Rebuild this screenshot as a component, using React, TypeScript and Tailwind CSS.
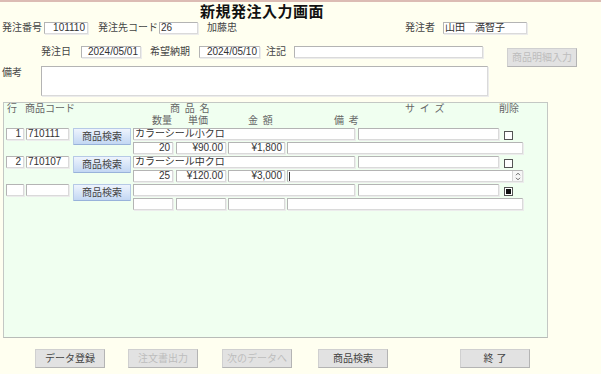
import React from "react";

const FONT = "font-['Liberation_Sans','Noto_Sans_CJK_JP',sans-serif]";

function Box({
  w,
  children,
  right,
  className = "",
}: {
  w: string;
  children?: React.ReactNode;
  right?: boolean;
  className?: string;
}) {
  return (
    <div
      className={`${w} h-[12px] shrink-0 bg-white border border-[#b4b4b4] border-b-[#dadada] border-r-[#dadada] shadow-[1px_1px_0_#ececec] text-[10px] leading-[10px] text-[#333] whitespace-nowrap overflow-hidden ${
        right ? "text-right pr-[2px]" : "text-left pl-[1px]"
      } ${className}`}
    >
      {children}
    </div>
  );
}

function GrayButton({
  w,
  children,
  disabled,
  className = "",
}: {
  w: string;
  children: React.ReactNode;
  disabled?: boolean;
  className?: string;
}) {
  return (
    <div
      className={`${w} h-[19px] shrink-0 flex items-center justify-center bg-[#e2e2e2] border border-[#d0d0d0] border-b-[#b4b4b4] border-r-[#b4b4b4] text-[10px] leading-[10px] ${
        disabled ? "text-[#bdbdbd]" : "text-[#444]"
      } ${className}`}
    >
      {children}
    </div>
  );
}

function BlueButton() {
  return (
    <div className="w-[58px] h-[17px] shrink-0 ml-[4px] flex items-center justify-center rounded-[1px] bg-gradient-to-b from-[#eef4fd] to-[#c3d7f3] border border-[#b6c9e6] border-b-[#98b2da] text-[10px] leading-[10px] text-[#444]">
      商品検索
    </div>
  );
}

function Check({ checked }: { checked?: boolean }) {
  return (
    <div className="w-[9px] h-[9px] ml-[5px] mt-[3px] shrink-0 bg-white border border-[#555] flex items-center justify-center">
      {checked && <div className="w-[5px] h-[5px] bg-[#111]" />}
    </div>
  );
}

type RowData = {
  no: string;
  code: string;
  name: string;
  qty: string;
  price: string;
  amount: string;
  checked?: boolean;
  spinner?: boolean;
};

function Row({ r }: { r: RowData }) {
  return (
    <div className="flex items-start h-[26px] mb-[2px]">
      <Box w="w-[18px] ml-[2px]" right>
        {r.no}
      </Box>
      <Box w="w-[43px] ml-[2px]">{r.code}</Box>
      <BlueButton />
      <div className="ml-[2px] flex flex-col gap-[2px]">
        <div className="flex items-start">
          <Box w="w-[222px]">{r.name}</Box>
          <Box w="w-[141px] ml-[3px]" />
          <Check checked={r.checked} />
        </div>
        <div className="flex items-start">
          <Box w="w-[40px]" right>
            {r.qty}
          </Box>
          <Box w="w-[50px] ml-[3px]" right>
            {r.price}
          </Box>
          <Box w="w-[57px] ml-[2px]" right>
            {r.amount}
          </Box>
          <div className="w-[236px] ml-[2px] h-[12px] shrink-0 bg-white border border-[#b4b4b4] border-b-[#dadada] border-r-[#dadada] shadow-[1px_1px_0_#ececec] flex items-center justify-between">
            {r.spinner ? (
              <>
                <div className="ml-[1px] w-[1px] h-[9px] bg-[#333]" />
                <div className="w-[10px] h-[10px] border-l border-[#d4d4d4] bg-[#f6f6f6] flex items-center justify-center">
                  <svg width="6" height="9" viewBox="0 0 6 9">
                    <path d="M1 3.2 L3 1.2 L5 3.2" fill="none" stroke="#555" strokeWidth="0.9" />
                    <path d="M1 5.8 L3 7.8 L5 5.8" fill="none" stroke="#555" strokeWidth="0.9" />
                  </svg>
                </div>
              </>
            ) : null}
          </div>
        </div>
      </div>
    </div>
  );
}

export default function App() {
  const rows: RowData[] = [
    { no: "1", code: "710111", name: "カラーシール小クロ", qty: "20", price: "¥90.00", amount: "¥1,800" },
    { no: "2", code: "710107", name: "カラーシール中クロ", qty: "25", price: "¥120.00", amount: "¥3,000", spinner: true },
    { no: "", code: "", name: "", qty: "", price: "", amount: "", checked: true },
  ];

  return (
    <div
      className={`${FONT} w-[601px] h-[374px] overflow-hidden bg-[#fffff0] border-t-2 border-[#dcbcb4] text-[10px] text-[#444] flex flex-col`}
    >
      {/* Title */}
      <div className="h-[18px] pl-[200px] text-[15px] leading-[18px] font-bold tracking-[0.5px] text-[#111] font-['Noto_Sans_CJK_JP',sans-serif]">
        新規発注入力画面
      </div>

      {/* Row 1 */}
      <div className="h-[16px] flex items-center leading-[12px]">
        <span className="ml-[2px] w-[42px] shrink-0">発注番号</span>
        <Box w="w-[44px]" right>
          101110
        </Box>
        <span className="ml-[10px] w-[61px] shrink-0">発注先コード</span>
        <Box w="w-[39px]">26</Box>
        <span className="ml-[9px] w-[198px] shrink-0">加藤忠</span>
        <span className="w-[38px] shrink-0">発注者</span>
        <Box w="w-[84px]">山田　満智子</Box>
      </div>

      {/* Row 2 */}
      <div className="mt-[10px] h-[12px] flex items-start leading-[12px]">
        <span className="ml-[41px] w-[40px] shrink-0">発注日</span>
        <Box w="w-[60px]" right>
          2024/05/01
        </Box>
        <span className="ml-[9px] w-[49px] shrink-0">希望納期</span>
        <Box w="w-[61px]" right>
          2024/05/10
        </Box>
        <span className="ml-[6px] w-[28px] shrink-0">注記</span>
        <Box w="w-[189px]" />
        <GrayButton w="w-[70px]" disabled className="ml-[24px] mt-[2px]">
          商品明細入力
        </GrayButton>
      </div>

      {/* Row 3 */}
      <div className="mt-[8px] flex items-start">
        <span className="ml-[2px] w-[39px] shrink-0 mt-[1px] leading-[12px]">備考</span>
        <div className="w-[447px] h-[30px] bg-white border border-[#b4b4b4] border-b-[#dadada] border-r-[#dadada] shadow-[1px_1px_0_#ececec]" />
      </div>

      {/* Detail panel */}
      <div className="mt-[6px] ml-[3px] w-[545px] h-[236px] shrink-0 bg-[#f0fff0] border border-[#c4c8c4] border-b-[#b8bcb8] flex flex-col text-[#666]">
        <div className="h-[11px] flex leading-[11px]">
          <span className="ml-[3px] w-[18px] shrink-0">行</span>
          <span className="w-[145px] shrink-0">商品コード</span>
          <span className="w-[235px] shrink-0 tracking-[1px]">商 品 名</span>
          <span className="w-[94px] shrink-0 tracking-[1px]">サ イ ズ</span>
          <span>削除</span>
        </div>
        <div className="h-[12px] flex leading-[12px] pt-[1px]">
          <span className="ml-[148px] w-[36px] shrink-0">数量</span>
          <span className="w-[60px] shrink-0">単価</span>
          <span className="w-[86px] shrink-0 tracking-[1px]">金 額</span>
          <span className="tracking-[1px]">備 考</span>
        </div>
        <div className="mt-[2px] flex flex-col">
          {rows.map((r, i) => (
            <Row key={i} r={r} />
          ))}
        </div>
      </div>

      {/* Bottom buttons */}
      <div className="mt-[11px] flex">
        <GrayButton w="w-[70px]" className="ml-[35px]">
          データ登録
        </GrayButton>
        <GrayButton w="w-[70px]" disabled className="ml-[23px]">
          注文書出力
        </GrayButton>
        <GrayButton w="w-[70px]" disabled className="ml-[24px]">
          次のデータへ
        </GrayButton>
        <GrayButton w="w-[70px]" className="ml-[26px]">
          商品検索
        </GrayButton>
        <GrayButton w="w-[70px]" className="ml-[72px]">
          終 了
        </GrayButton>
      </div>
    </div>
  );
}
